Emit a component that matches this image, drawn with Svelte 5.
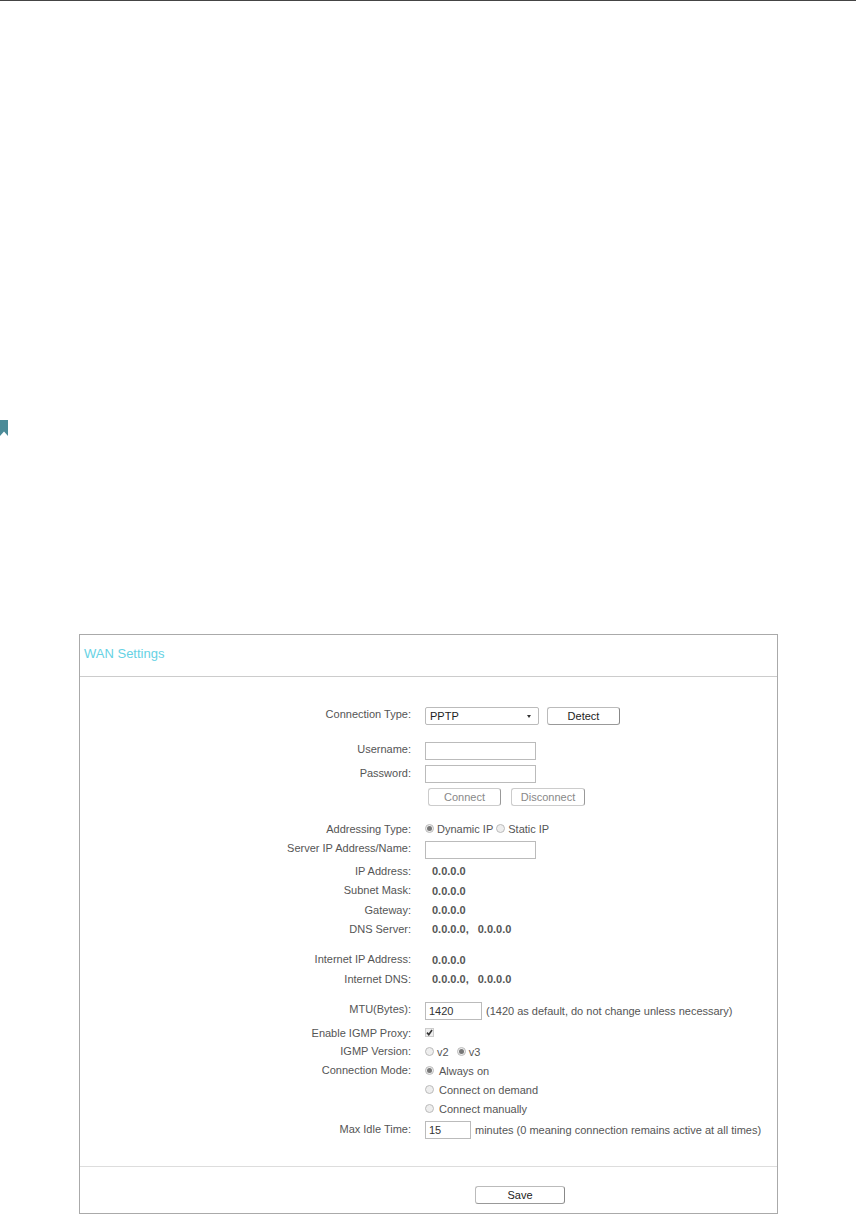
<script>
  let connectionType = 'PPTP';
  let username = '';
  let password = '';
  let serverIp = '';
  let mtu = '1420';
  let idleTime = '15';
</script>

<div class="page">
  <svg class="bookmark" width="8" height="16" viewBox="0 0 8 16">
    <path d="M0 0H8V16L4 11.5L0 16Z" fill="#4b8b98" />
  </svg>

  <section class="panel">
    <h2>WAN Settings</h2>

    <div class="form">
      <div class="row">
        <span class="label up2">Connection Type:</span>
        <div class="select">
          <span>{connectionType}</span>
          <i class="caret"></i>
        </div>
        <button class="btn detect">Detect</button>
      </div>

      <div class="row m16">
        <span class="label up2">Username:</span>
        <input class="text wide" bind:value={username} />
      </div>
      <div class="row m4">
        <span class="label up1">Password:</span>
        <input class="text wide" bind:value={password} />
      </div>
      <div class="row m4">
        <span class="label"></span>
        <button class="btn off connect">Connect</button>
        <button class="btn off disconnect">Disconnect</button>
      </div>

      <div class="row m13">
        <span class="label">Addressing Type:</span>
        <span class="radio on"></span><span class="opt tight">Dynamic IP</span>
        <span class="radio static"></span><span class="opt tight">Static IP</span>
      </div>
      <div class="row m2">
        <span class="label up2">Server IP Address/Name:</span>
        <input class="text wide" bind:value={serverIp} />
      </div>

      <div class="row m2">
        <span class="label">IP Address:</span>
        <b class="value">0.0.0.0</b>
      </div>
      <div class="row m1">
        <span class="label up1">Subnet Mask:</span>
        <b class="value">0.0.0.0</b>
      </div>
      <div class="row">
        <span class="label">Gateway:</span>
        <b class="value">0.0.0.0</b>
      </div>
      <div class="row">
        <span class="label">DNS Server:</span>
        <b class="value">0.0.0.0,</b>
        <b class="value second">0.0.0.0</b>
      </div>

      <div class="row m12">
        <span class="label up1">Internet IP Address:</span>
        <b class="value">0.0.0.0</b>
      </div>
      <div class="row">
        <span class="label">Internet DNS:</span>
        <b class="value">0.0.0.0,</b>
        <b class="value second">0.0.0.0</b>
      </div>

      <div class="row m13">
        <span class="label up2">MTU(Bytes):</span>
        <input class="text mtu" bind:value={mtu} />
        <span class="note">(1420 as default, do not change unless necessary)</span>
      </div>
      <div class="row m3">
        <span class="label">Enable IGMP Proxy:</span>
        <span class="check">
          <svg width="7" height="7" viewBox="0 0 7 7">
            <path d="M1 3.6L2.8 5.6L6 1" fill="none" stroke="#333" stroke-width="1.6" />
          </svg>
        </span>
      </div>
      <div class="row">
        <span class="label up1">IGMP Version:</span>
        <span class="radio"></span><span class="opt tight">v2</span>
        <span class="radio v3 on"></span><span class="opt tight">v3</span>
      </div>
      <div class="row">
        <span class="label up1">Connection Mode:</span>
        <span class="radio on"></span><span class="opt">Always on</span>
      </div>
      <div class="row">
        <span class="label"></span>
        <span class="radio"></span><span class="opt">Connect on demand</span>
      </div>
      <div class="row">
        <span class="label"></span>
        <span class="radio"></span><span class="opt">Connect manually</span>
      </div>
      <div class="row m2">
        <span class="label up1">Max Idle Time:</span>
        <input class="text idle" bind:value={idleTime} />
        <span class="note">minutes (0 meaning connection remains active at all times)</span>
      </div>
    </div>

    <div class="footer">
      <button class="btn save">Save</button>
    </div>
  </section>
</div>

<style>
  :global(body) {
    background: #fff;
    font-family: "Liberation Sans", Arial, sans-serif;
    font-size: 11px;
    color: #555;
  }
  .page {
    border-top: 1px solid #444;
    height: 1213px;
    overflow: hidden;
  }
  .bookmark {
    display: block;
    margin-top: 419px;
  }
  .panel {
    margin: 198px 0 0 79px;
    width: 697px;
    height: 578px;
    border: 1px solid #aaa;
    display: flex;
    flex-direction: column;
  }
  h2 {
    margin: 0;
    height: 41px;
    line-height: 38px;
    padding-left: 4px;
    font-size: 13px;
    font-weight: normal;
    color: #66d2e4;
    border-bottom: 1px solid #ccc;
  }
  .form {
    padding-top: 29px;
    flex: 1;
  }
  .row {
    display: flex;
    align-items: center;
    height: 19px;
  }
  .m1 { margin-top: 1px; }
  .m2 { margin-top: 2px; }
  .m3 { margin-top: 3px; }
  .m4 { margin-top: 4px; }
  .m12 { margin-top: 12px; }
  .m13 { margin-top: 13px; }
  .m16 { margin-top: 16px; }
  .label {
    width: 331px;
    margin-right: 14px;
    text-align: right;
    flex: none;
  }
  /* labels sit a little above their controls */
  .up1 { margin-bottom: 2px; }
  .up2 { margin-bottom: 4px; }
  .select {
    box-sizing: content-box;
    width: 101px;
    height: 16px;
    margin-top: 1px;
    padding: 0 7px 0 4px;
    border: 1px solid #bbb;
    border-radius: 2px;
    display: flex;
    align-items: center;
    justify-content: space-between;
    color: #222;
  }
  .caret {
    width: 0;
    height: 0;
    border-left: 2px solid transparent;
    border-right: 2px solid transparent;
    border-top: 3px solid #333;
  }
  .btn {
    height: 18px;
    margin-top: 1px;
    padding: 0;
    background: #fff;
    border: 1px solid #bbb;
    border-right-color: #888;
    border-bottom-color: #999;
    border-radius: 3px;
    font: inherit;
    color: #222;
  }
  .btn.off {
    color: #888;
    border-color: #ccc;
    border-right-color: #999;
  }
  .detect { width: 73px; margin-left: 8px; }
  .connect { width: 73px; margin-left: 3px; }
  .disconnect { width: 74px; margin-left: 10px; }
  .text {
    box-sizing: border-box;
    height: 18px;
    margin-top: 1px;
    border: 1px solid #bbb;
    padding: 0 3px;
    font: inherit;
    color: #333;
    outline: none;
    background: #fff;
  }
  .wide { width: 111px; }
  .mtu { width: 57px; }
  .idle { width: 46px; }
  .note { margin-left: 4px; }
  .value {
    margin-left: 7px;
    color: #555;
  }
  .value.second { margin-left: 9px; }
  .radio {
    box-sizing: border-box;
    width: 9px;
    height: 9px;
    border: 1px solid #bbb;
    border-radius: 50%;
    background: #eee;
    flex: none;
    position: relative;
  }
  .radio.on::after {
    content: "";
    position: absolute;
    inset: 1px;
    border-radius: 50%;
    background: #777;
  }
  .radio.static { margin-left: 3px; }
  .radio.v3 { margin-left: 8px; }
  .opt { margin-left: 5px; }
  .opt.tight { margin-left: 3px; }
  .check {
    box-sizing: border-box;
    width: 9px;
    height: 9px;
    border: 1px solid #ccc;
    background: #eee;
    display: flex;
    align-items: center;
    justify-content: center;
  }
  .check svg { flex: none; }
  .footer {
    height: 47px;
    border-top: 1px solid #ddd;
    padding-top: 19px;
    box-sizing: border-box;
    padding-left: 395px;
  }
  .save { display: block; width: 90px; margin-top: 0; }
</style>
